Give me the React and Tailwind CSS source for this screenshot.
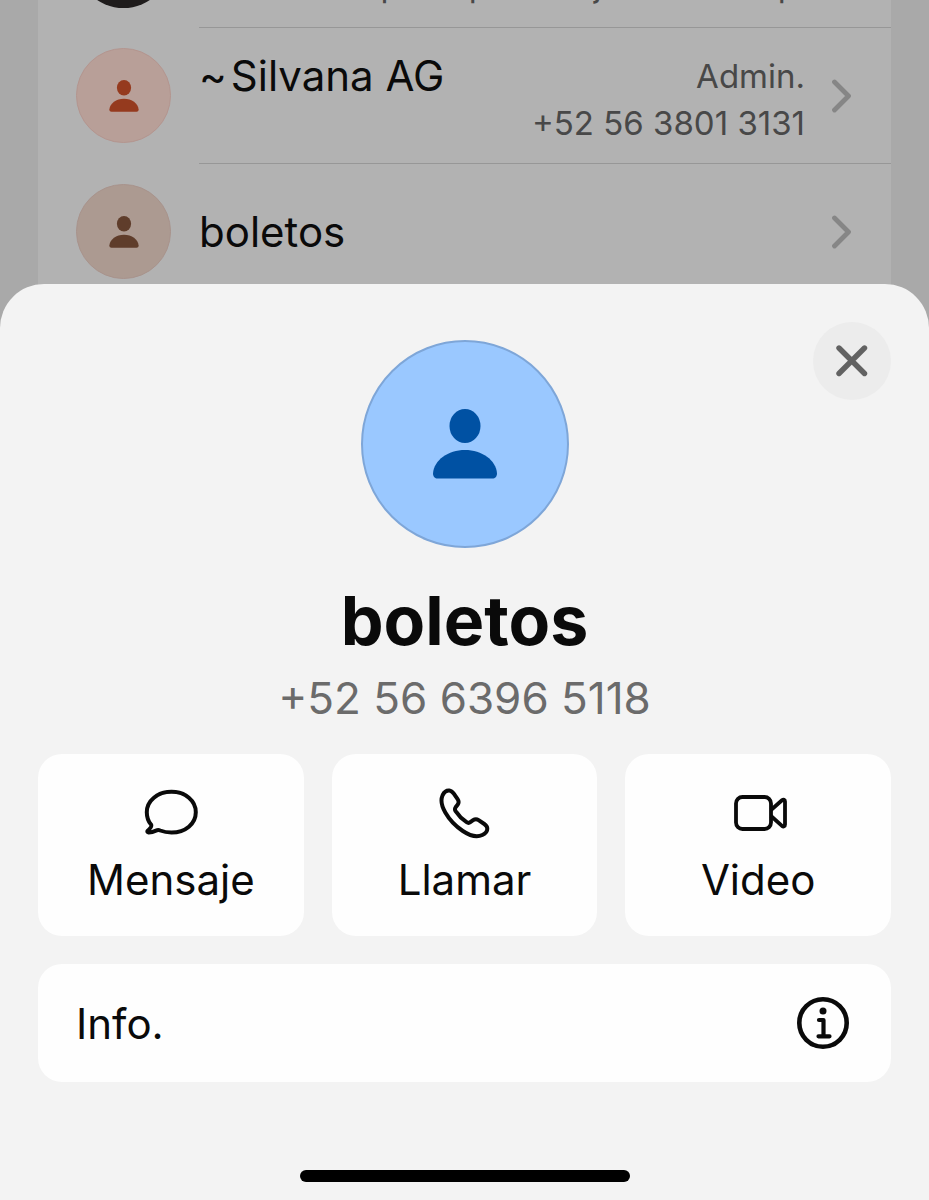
import React from "react";

const members = [
  {
    id: 1,
    name: "Silvana AG",
    unsaved: true,
    role: "Admin.",
    phone: "+52 56 3801 3131",
    avatar: "bg-[#b89f98] border-[#b3958f] text-[#953a1e]",
  },
  {
    id: 2,
    name: "boletos",
    avatar: "bg-[#ac9a91] border-[#a8938c] text-[#5f3d2b]",
  },
];

const PersonIcon = ({ className }) => (
  <svg viewBox="0 0 64 70" fill="currentColor" className={className} aria-hidden="true">
    <ellipse cx="32" cy="17" rx="15.5" ry="17" />
    <path d="M4.500 69.500C2 69.500 0 67.500 0 64.500C1 51 15 41 32 41C49 41 63 51 64 64.500C64 67.500 62 69.500 59.500 69.500Z" />
  </svg>
);

const ChevronIcon = () => (
  <svg viewBox="0 0 22 34" fill="none" className="w-[22px] h-[34px] text-[#868686]" aria-hidden="true">
    <path
      d="M3.500 3L17.500 17L3.500 31"
      stroke="currentColor"
      strokeWidth="4.800"
      strokeLinecap="round"
      strokeLinejoin="round"
    />
  </svg>
);

const CloseIcon = () => (
  <svg viewBox="0 0 32 32" fill="none" className="w-8 h-8" aria-hidden="true">
    <path d="M3 3L28.500 28.500M28.500 3L3 28.500" stroke="currentColor" strokeWidth="5.400" strokeLinecap="round" />
  </svg>
);

const MessageIcon = () => (
  <svg
    viewBox="0 0 56 48"
    fill="none"
    stroke="currentColor"
    strokeWidth="4"
    strokeLinejoin="round"
    className="w-14 h-12"
    aria-hidden="true"
  >
    <path d="M28.500 2.800C42.500 2.800 52.800 11.800 52.800 23.200C52.800 34.700 42.500 43.500 28.500 43.500C24 43.500 20.500 42.800 17.200 41.500C15.600 40.800 14.500 40.900 13 41.600C10.500 42.800 8 43.500 5.500 43.400C4.300 43.300 4 42.500 4.800 41.600C7.600 39 9.200 37.200 8 35.500C5 32 3.800 28 3.800 23.200C3.800 11.800 14.500 2.800 28.500 2.800Z" />
  </svg>
);

const PhoneIcon = () => (
  <svg
    viewBox="0 0 56 52"
    fill="none"
    stroke="currentColor"
    strokeWidth="4"
    strokeLinejoin="round"
    className="w-14 h-[52px]"
    aria-hidden="true"
  >
    <path d="M6.500 8.500C8 5 10.800 3.300 13.300 3.500C15.300 3.700 16.500 4.800 17.800 6.700L21.600 12.100C23.100 14.300 23.100 15.700 21.600 17.700L19.600 20.300C18.600 21.700 18.600 22.500 19.600 24.100C22.500 28.500 26.300 32.300 30.600 35.200C32.100 36.200 33 36.200 34.300 35.200L37.100 33.200C39.100 31.800 40.600 31.800 42.600 33.100L48.300 37C50.300 38.400 51.300 39.700 51.300 41.700C51.300 44 49.500 46.500 46.300 48C41.300 50.300 34.300 49 26.800 44C19.800 39.300 13.300 32.500 9.300 25.500C5.600 19 4.500 13 6.500 8.500Z" />
  </svg>
);

const VideoIcon = () => (
  <svg
    viewBox="0 0 56 38"
    fill="none"
    stroke="currentColor"
    strokeWidth="3.800"
    strokeLinejoin="round"
    className="w-14 h-[38px] overflow-visible"
    aria-hidden="true"
  >
    <rect x="6" y="3" width="35" height="32" rx="6.500" />
    <path d="M41 16L52 6.300C53.500 5 55 5.500 55 7.500V30.500C55 32.500 53.500 33 52 31.900L41 22" />
  </svg>
);

const InfoIcon = () => (
  <svg viewBox="0 0 52 52" fill="none" className="w-[52px] h-[52px]" aria-hidden="true">
    <circle cx="26" cy="26" r="23.700" stroke="currentColor" strokeWidth="4.600" />
    <circle cx="26" cy="14" r="3.500" fill="currentColor" />
    <path
      d="M22 23H26.500V39M21.500 39.300H32.500"
      stroke="currentColor"
      strokeWidth="4.200"
      strokeLinecap="round"
      strokeLinejoin="round"
    />
  </svg>
);

const actions = [
  { label: "Mensaje", icon: <MessageIcon /> },
  { label: "Llamar", icon: <PhoneIcon /> },
  { label: "Video", icon: <VideoIcon /> },
];

const MemberRow = ({ member }) => {
  return (
    <li className="flex h-34 pl-[38px]">
      <div
        className={`mt-5 w-[95px] h-[95px] shrink-0 rounded-full border flex items-center justify-center ${member.avatar}`}
      >
        <PersonIcon className="w-[30px] h-8" />
      </div>
      <button
        type="button"
        className="ml-7 flex-1 flex items-center border-b border-[#979797] text-left pr-[38px]"
      >
        <span
          className={`flex-1 flex gap-1 text-[42px] leading-[56px] ${
            member.phone ? "self-start mt-5" : ""
          }`}
        >
          {member.unsaved && <span>~</span>}
          <span>{member.name}</span>
        </span>
        {member.phone && (
          <span className="mt-2 text-right text-[33px] leading-[47px] text-[#484848] pr-[26px]">
            <span className="block">{member.role}</span>
            <span className="block">{member.phone}</span>
          </span>
        )}
        <ChevronIcon />
      </button>
    </li>
  );
};

const ContactSheet = () => {
  return (
    <section
      role="dialog"
      aria-labelledby="contact-name"
      className="fixed inset-x-0 bottom-0 rounded-t-[44px] bg-[#f3f3f3] px-[38px] pt-14 pb-[18px] text-[#0a0a0a]"
    >
      <button
        type="button"
        aria-label="Cerrar"
        className="absolute top-[38px] right-[38px] w-[78px] h-[78px] rounded-full bg-[#ececec] text-[#626262] flex items-center justify-center"
      >
        <CloseIcon />
      </button>

      <div className="flex flex-col items-center">
        <div className="w-52 h-52 rounded-full border-2 border-[#7ea6d8] bg-[#9ac8ff] text-[#0051a3] flex items-center justify-center">
          <PersonIcon className="w-16 h-[70px]" />
        </div>
        <h1 id="contact-name" className="mt-8 text-[68px] leading-[80px] font-bold">
          boletos
        </h1>
        <p className="mt-2 text-[44px] leading-[60px] text-[#6b6b6b]">+52 56 6396 5118</p>
      </div>

      <div className="mt-[26px] grid grid-cols-3 gap-7">
        {actions.map((action) => (
          <button
            key={action.label}
            type="button"
            className="h-[182px] rounded-3xl bg-[#fefefe] flex flex-col items-center pt-8"
          >
            <span className="h-[54px] flex items-center">{action.icon}</span>
            <span className="mt-3 text-[42px] leading-[56px]">{action.label}</span>
          </button>
        ))}
      </div>

      <button
        type="button"
        className="mt-7 w-full h-[118px] rounded-3xl bg-[#fefefe] pl-[38px] pr-[42px] flex items-center justify-between text-[42px]"
      >
        <span>Info.</span>
        <InfoIcon />
      </button>

      <div className="mt-[88px] mx-auto w-[330px] h-3 rounded-full bg-black" />
    </section>
  );
};

const App = () => {
  return (
    <div className="min-h-screen bg-[#a9a9a9] font-['Inter',sans-serif] text-[#0a0a0a]">
      <main className="mx-[38px] min-h-screen bg-[#b2b2b2]">
        {/* last visible part of the member scrolled off the top */}
        <div className="h-7 overflow-hidden flex items-end pl-[38px]">
          <div className="mb-5 w-[95px] h-[95px] shrink-0 rounded-full bg-[#1f1c1c]" />
          <div className="ml-7 flex-1 border-b border-[#979797]">
            <p className="mb-[18px] text-[33px] leading-[47px] text-[#484848] whitespace-nowrap">
              Solo el tiempo te pide mejorar el tiempo
            </p>
          </div>
        </div>
        <ul>
          {members.map((member) => (
            <MemberRow key={member.id} member={member} />
          ))}
        </ul>
      </main>
      <ContactSheet />
    </div>
  );
};

export default App;
